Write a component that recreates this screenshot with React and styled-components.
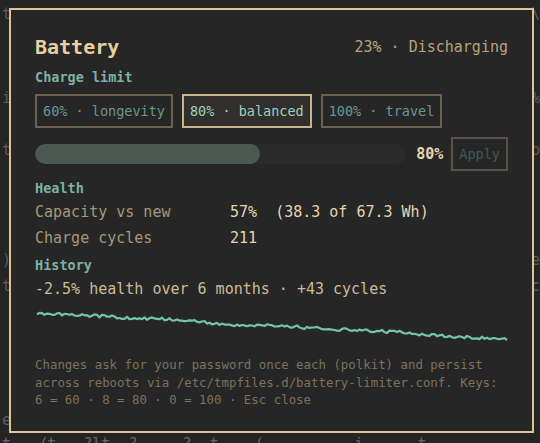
import React from 'react'
import styled, { createGlobalStyle } from 'styled-components'

const mono = `"DejaVu Sans Mono", "Liberation Mono", monospace`

const GlobalStyle = createGlobalStyle`
  html, body {
    margin: 0;
    padding: 0;
    background: #242424;
  }
  body {
    width: 540px;
    height: 443px;
    overflow: hidden;
    font-family: ${mono};
  }
`

const Screen = styled.div`
  position: relative;
  width: 540px;
  height: 443px;
  overflow: hidden;
  background: #242424;
`

const Terminal = styled.div`
  padding: 0 0 0 2px;
  font-family: ${mono};
  font-size: 15px;
  line-height: 18px;
  color: #5c5c5c;
  white-space: pre;
`

const TermLine = styled.div`
  display: flex;
  justify-content: space-between;
  margin-top: ${props => props.$gap}px;
  color: ${props => props.$bright ? '#666666' : '#5c5c5c'};
`

const Dialog = styled.div`
  position: absolute;
  left: 9px;
  top: 8px;
  width: 525px;
  height: 425px;
  box-sizing: border-box;
  border: 2px solid #dcc498;
  background: #262626;
  padding: 24px 24px 0 24px;
  display: flex;
  flex-direction: column;
  font-family: ${mono};
`

const TitleRow = styled.div`
  display: flex;
  justify-content: space-between;
  align-items: center;
  height: 26px;
`

const Title = styled.h1`
  margin: 0;
  font-size: 20px;
  font-weight: bold;
  color: #e8cfa0;
  line-height: 26px;
`

const Status = styled.span`
  font-size: 15px;
  color: #b8a37f;
`

const SectionLabel = styled.div`
  margin-top: ${props => props.$gap}px;
  font-size: 13.5px;
  font-weight: bold;
  line-height: 18px;
  color: #7fb0a5;
`

const Choices = styled.div`
  display: flex;
  gap: 9px;
  margin-top: 8px;
`

const Choice = styled.button`
  height: 34px;
  padding: 0 6px;
  box-sizing: border-box;
  font-family: ${mono};
  font-size: 13.5px;
  background: ${props => props.$active ? '#302f2b' : 'transparent'};
  color: ${props => props.$active ? '#9fcfc2' : '#6a978d'};
  border: 2px solid ${props => props.$active ? '#c9b48d' : '#6b624d'};
  border-radius: 0;
  cursor: pointer;
`

const LimitRow = styled.div`
  display: flex;
  align-items: center;
  margin-top: 9px;
  height: 34px;
`

const Track = styled.div`
  flex: 1;
  height: 20px;
  border-radius: 10px;
  background: #2b2b2b;
  overflow: hidden;
`

const Fill = styled.div`
  height: 100%;
  border-radius: 10px;
  background: #4a5a52;
`

const LimitValue = styled.span`
  margin: 0 8px 0 10px;
  font-size: 15px;
  font-weight: bold;
  color: #e9d6b0;
`

const ApplyButton = styled.button`
  height: 34px;
  padding: 0 6px;
  box-sizing: border-box;
  font-family: ${mono};
  font-size: 13.5px;
  background: transparent;
  color: #3f5a53;
  border: 2px solid #5a5344;
  border-radius: 0;
`

const Stats = styled.div`
  margin-top: 2px;
`

const StatRow = styled.div`
  display: flex;
  line-height: 26px;
  font-size: 15px;
  white-space: pre;
`

const StatLabel = styled.span`
  width: 195px;
  color: #a6977a;
`

const StatValue = styled.span`
  color: #e6d3ae;
`

const Summary = styled.div`
  margin-top: 4px;
  font-size: 15px;
  line-height: 22px;
  color: #cfbb95;
`

const Spark = styled.svg`
  display: block;
  margin-top: 6px;
  width: 473px;
  height: 40px;
`

const Footer = styled.p`
  margin: 10px 0 0 0;
  font-size: 12.4px;
  line-height: 17.5px;
  color: #7b715d;
`

const anchors = [
  [37, 313], [70, 315], [100, 316], [130, 318], [165, 319], [200, 321],
  [215, 324], [240, 325], [270, 325], [300, 327], [350, 330], [400, 332],
  [440, 336], [480, 338], [509, 339]
]

const baseAt = (x) => {
  for (let i = 0; i < anchors.length - 1; i++) {
    const [x0, y0] = anchors[i]
    const [x1, y1] = anchors[i + 1]
    if (x >= x0 && x <= x1) return y0 + (y1 - y0) * (x - x0) / (x1 - x0)
  }
  return anchors[anchors.length - 1][1]
}

const sparkPath = (() => {
  const pts = []
  for (let x = 37; x <= 508; x += 2.5) {
    const n = Math.sin(x * 12.9898) * 43758.5453
    const jitter = (n - Math.floor(n) - 0.5) * 3
    pts.push(`${(x - 35).toFixed(1)},${(baseAt(x) - 306 + jitter).toFixed(1)}`)
  }
  return 'M' + pts.join(' L')
})()

const choices = [
  { label: '60% · longevity' },
  { label: '80% · balanced', active: true },
  { label: '100% · travel' }
]

const App = () => {
  return (
    <Screen>
      <GlobalStyle />
      <Terminal>
        <TermLine $gap={5}><span>t</span><span>\</span></TermLine>
        <TermLine $gap={66}><span>i</span><span>%</span></TermLine>
        <TermLine $gap={34}><span>t</span><span>p</span></TermLine>
        <TermLine $gap={92}><span>)</span><span>e</span></TermLine>
        <TermLine $gap={8}><span>t</span><span>c</span></TermLine>
        <TermLine $gap={116}><span>e</span><span> </span></TermLine>
        <TermLine $gap={6} $bright>
          <span>t   /t   ?lt  ?     ?  t    (          i      t</span>
        </TermLine>
      </Terminal>

      <Dialog>
        <TitleRow>
          <Title>Battery</Title>
          <Status>23% · Discharging</Status>
        </TitleRow>

        <SectionLabel $gap={8}>Charge limit</SectionLabel>
        <Choices>
          {choices.map(c => (
            <Choice key={c.label} $active={c.active}>{c.label}</Choice>
          ))}
        </Choices>

        <LimitRow>
          <Track>
            <Fill style={{ width: '60.5%' }} />
          </Track>
          <LimitValue>80%</LimitValue>
          <ApplyButton>Apply</ApplyButton>
        </LimitRow>

        <SectionLabel $gap={8}>Health</SectionLabel>
        <Stats>
          <StatRow>
            <StatLabel>Capacity vs new</StatLabel>
            <StatValue>57%  (38.3 of 67.3 Wh)</StatValue>
          </StatRow>
          <StatRow>
            <StatLabel>Charge cycles</StatLabel>
            <StatValue>211</StatValue>
          </StatRow>
        </Stats>

        <SectionLabel $gap={5}>History</SectionLabel>
        <Summary>-2.5% health over 6 months · +43 cycles</Summary>
        <Spark viewBox="0 0 473 40">
          <path d={sparkPath} fill="none" stroke="#73c5aa" strokeWidth="2.2" strokeLinejoin="round" />
        </Spark>

        <Footer>
          Changes ask for your password once each (polkit) and persist
          <br />
          across reboots via /etc/tmpfiles.d/battery-limiter.conf. Keys:
          <br />
          6 = 60 · 8 = 80 · 0 = 100 · Esc close
        </Footer>
      </Dialog>
    </Screen>
  )
}

export default App
